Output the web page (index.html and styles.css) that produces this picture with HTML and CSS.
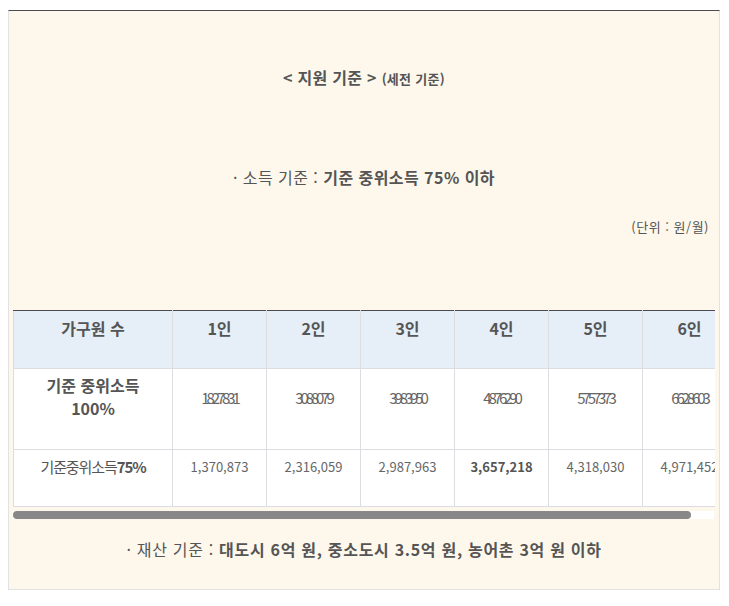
FILE: index.html
```html
<!DOCTYPE html>
<html lang="ko">
<head>
<meta charset="utf-8">
<title>지원 기준</title>
<link rel="stylesheet" href="styles.css">
</head>
<body>
<div class="box">
  <p class="title">&lt; 지원 기준 &gt; <span class="small">(세전 기준)</span></p>
  <p class="income">· 소득 기준 : <b>기준 중위소득 75% 이하</b></p>
  <p class="unit">(단위 : 원/월)</p>
  <div class="scroll">
    <table class="tbl">
      <colgroup>
        <col class="c0"><col class="cn"><col class="cn"><col class="cn"><col class="cn"><col class="cn"><col class="cn">
      </colgroup>
      <tr class="head">
        <th>가구원 수</th><th>1인</th><th>2인</th><th>3인</th><th>4인</th><th>5인</th><th>6인</th>
      </tr>
      <tr class="r100">
        <td class="lbl">기준 중위소득<br>100%</td>
        <td class="sq">1827831</td><td class="sq">3088079</td><td class="sq">3983950</td><td class="sq">4876290</td><td class="sq">5757373</td><td class="sq">6628603</td>
      </tr>
      <tr class="r75">
        <td class="lbl75">기준중위소득<b>75%</b></td>
        <td>1,370,873</td><td>2,316,059</td><td>2,987,963</td><td class="strong">3,657,218</td><td>4,318,030</td><td>4,971,452</td>
      </tr>
    </table>
  </div>
  <div class="hbar"><div class="thumb"></div></div>
  <p class="asset">· 재산 기준 : <b>대도시 6억 원, 중소도시 3.5억 원, 농어촌 3억 원 이하</b></p>
</div>
</body>
</html>
```
FILE: styles.css
```css
* { box-sizing: border-box; }
html, body { margin: 0; padding: 0; background: #fff; }
body {
  font-family: "Noto Sans CJK KR", "Noto Sans", sans-serif;
  color: #555;
  padding: 10px 0 0 8px;
}
.box {
  width: 712px;
  background: #fef8ec;
  border: 1px solid #e2e2e2;
  border-top: 1px solid #4a4c52;
  padding: 0 4px 29px 4px;
}
p { margin: 0; }
.title {
  margin-top: 56px;
  text-align: center;
  font-size: 16px;
  line-height: 20px;
  font-weight: bold;
  color: #555;
  letter-spacing: 0.3px;
}
.title .small { font-size: 13px; }
.income {
  margin-top: 77px;
  text-align: center;
  font-size: 16px;
  line-height: 22px;
  color: #555;
  letter-spacing: 0.45px;
}
.income b, .asset b { font-weight: bold; }
.unit {
  margin-top: 30px;
  text-align: right;
  font-size: 13px;
  line-height: 18px;
  padding-right: 6px;
  color: #555;
  letter-spacing: 0.5px;
}
.scroll {
  margin-top: 74px;
  overflow: hidden;
}
.tbl {
  border-collapse: collapse;
  table-layout: fixed;
  width: 724px;
  background: #fff;
}
.c0 { width: 159px; }
.cn { width: 94px; }
.tbl th, .tbl td {
  border: 1px solid #dcdde0;
  text-align: center;
  vertical-align: top;
  padding: 5px 0 0 0;
  line-height: 24px;
  color: #555;
  white-space: nowrap;
  overflow: hidden;
}
.tbl tr:first-child th { border-top: 1px solid #4a4c52; }
.head th {
  height: 58px;
  background: #e6eef8;
  font-size: 16px;
  font-weight: bold;
}
.r100 td { height: 81px; font-size: 13px; }
.r100 td.sq {
  padding-top: 17px;
  font-size: 15px;
  letter-spacing: -3.1px;
  color: #666;
}
.r100 td.lbl {
  font-size: 16px;
  font-weight: bold;
  line-height: 23px;
}
.r75 td { height: 57px; font-size: 13px; color: #666; }
.r75 td.lbl75 {
  font-size: 15px;
  letter-spacing: -1.1px;
  color: #555;
}
.r75 td.strong { font-weight: bold; color: #555; }
.hbar {
  margin-top: 4px;
  height: 8px;
  width: 701px;
  background: #fff;
  display: flex;
}
.thumb {
  width: 678px;
  height: 8px;
  background: #888;
  border-radius: 4px;
}
.asset {
  margin-top: 19px;
  text-align: center;
  font-size: 16px;
  line-height: 22px;
  color: #555;
  letter-spacing: 0.7px;
}
```
